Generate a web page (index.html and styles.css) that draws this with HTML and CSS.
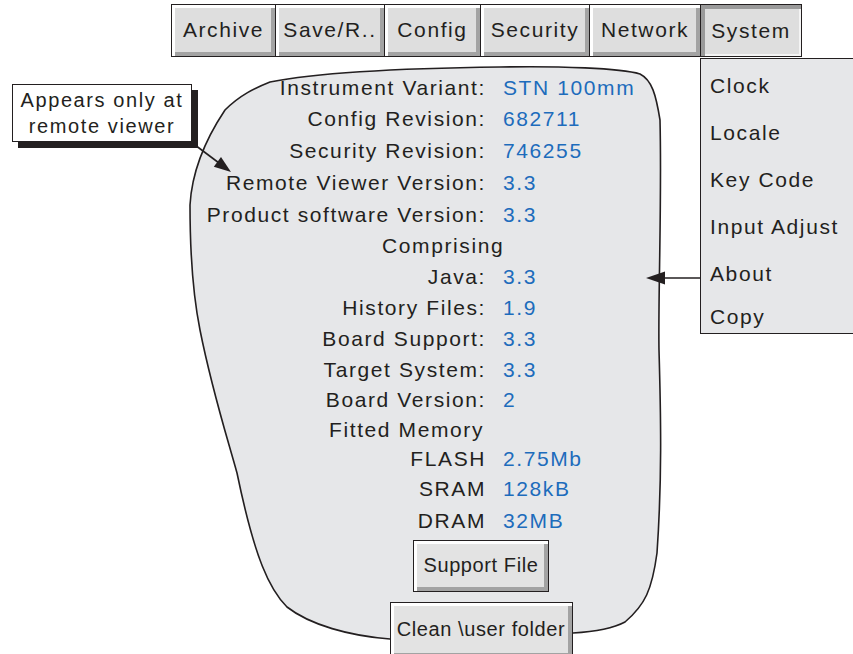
FILE: index.html
```html
<!DOCTYPE html>
<html lang="en">
<head>
    <meta charset="UTF-8">
    <title>System - About</title>
    <link rel="stylesheet" href="styles.css">
</head>
<body>
    <div class="stage">
        <svg class="diagram" width="853" height="654" viewBox="0 0 853 654">
            <path class="blob" d="M 270 82 C 320 72, 420 68, 500 67 C 560 66, 620 68, 640 74 C 652 80, 656 95, 660 120 C 662 200, 658 300, 659 350 C 661 420, 662 480, 657 553 C 652 590, 645 605, 625 622 C 610 630, 590 632, 573 633 L 390 639 C 350 636, 310 625, 287 607 C 270 590, 255 560, 237 473 C 225 430, 212 390, 200 330 C 192 290, 190 240, 190 205 C 192 170, 205 140, 225 110 C 240 95, 255 88, 270 82 Z"/>
            <line class="pointer" x1="195" y1="145" x2="219" y2="163"/>
            <polygon class="head" points="231,172 213.8,166.7 221,157.1"/>
            <line class="pointer" x1="702" y1="278" x2="662" y2="278"/>
            <polygon class="head" points="646,278 665,271.5 665,284.5"/>
        </svg>

        <nav class="menubar">
            <div class="tab w-archive">Archive</div>
            <div class="tab w-save">Save/R..</div>
            <div class="tab w-config">Config</div>
            <div class="tab w-security">Security</div>
            <div class="tab w-network">Network</div>
            <div class="tab w-system pressed">System
                <ul class="dropdown">
                    <li>Clock</li>
                    <li>Locale</li>
                    <li>Key Code</li>
                    <li>Input Adjust</li>
                    <li>About</li>
                    <li>Copy</li>
                </ul>
            </div>
        </nav>

        <div class="callout">Appears only at<br>remote viewer</div>

        <main class="info">
            <div class="grid">
                <div class="label">Instrument Variant:</div><div class="value">STN 100mm</div>
                <div class="label">Config Revision:</div><div class="value">682711</div>
                <div class="label">Security Revision:</div><div class="value">746255</div>
                <div class="label">Remote Viewer Version:</div><div class="value">3.3</div>
                <div class="label">Product software Version:</div><div class="value">3.3</div>
                <div class="heading comprising">Comprising</div>
                <div class="label">Java:</div><div class="value">3.3</div>
                <div class="label">History Files:</div><div class="value">1.9</div>
                <div class="label">Board Support:</div><div class="value">3.3</div>
                <div class="label">Target System:</div><div class="value">3.3</div>
                <div class="label">Board Version:</div><div class="value">2</div>
                <div class="heading memory">Fitted Memory</div>
                <div class="label">FLASH</div><div class="value">2.75Mb</div>
                <div class="label">SRAM</div><div class="value">128kB</div>
                <div class="label">DRAM</div><div class="value">32MB</div>
            </div>
            <button class="btn support">Support File</button>
            <button class="btn clean">Clean \user folder</button>
        </main>
    </div>
</body>
</html>
```

FILE: styles.css
```css
body { margin: 0; font-family: "Liberation Sans", Arial, sans-serif; color: #231f20; background: #fff; overflow: hidden; }
.stage { position: relative; width: 853px; height: 654px; overflow: hidden; }

.diagram { position: absolute; left: 0; top: 0; }
.blob { fill: #e6e7e9; stroke: #231f20; stroke-width: 1.6; }
.pointer { stroke: #231f20; stroke-width: 1.6; }
.head { fill: #231f20; }

.menubar { position: relative; z-index: 2; display: flex; margin-left: 172px; padding-top: 4px; height: 53px; }
.tab { box-sizing: border-box; height: 53px; margin-left: -1px; padding-bottom: 2px; border: 1px solid #231f20; background: #dedede; box-shadow: inset 3px 3px 0 #fff, inset -4px -4px 0 #a3a3a3; font-size: 21px; letter-spacing: 1.6px; display: flex; align-items: center; justify-content: center; }
.tab.pressed { position: relative; padding-bottom: 0; box-shadow: inset 4px 4px 0 #9a9a9a, inset -2px -2px 0 #f4f4f4; }
.w-archive { width: 105px; }
.w-save { width: 110px; }
.w-config { width: 97px; }
.w-security { width: 110px; }
.w-network { width: 112px; }
.w-system { width: 102px; }

.dropdown { position: absolute; left: -1px; top: 53px; width: 170px; height: 276px; box-sizing: border-box; margin: 0; padding: 4px 0 0 9px; list-style: none; background: #e6e7e9; border: 1.5px solid #231f20; }
.dropdown li { height: 47px; line-height: 45px; }
.dropdown li:last-child { line-height: 38px; }

.callout { position: absolute; left: 12px; top: 84px; width: 180px; height: 58px; box-sizing: border-box; padding-top: 2px; border: 1.5px solid #231f20; background: #fff; box-shadow: 6px 6px 0 #231f20; font-size: 20px; letter-spacing: 1.6px; line-height: 26px; text-align: center; }

.info { position: relative; z-index: 1; width: 562px; margin: 15px 0 0 200px; display: flex; flex-direction: column; align-items: center; }
.grid { display: grid; grid-template-columns: 286px 1fr; grid-template-rows: 31px 31.5px 32.5px 31.5px 31px 31.5px 31px 31px 31px 30px 29.5px 29.5px 30px 31.5px 32px; column-gap: 17px; width: 100%; font-size: 21px; letter-spacing: 1.6px; line-height: 31px; }
.label { text-align: right; }
.value { color: #1d6cbc; }
.heading { grid-column: 1 / -1; }
.comprising { padding-left: 182px; }
.memory { padding-left: 129px; }

.btn { font: inherit; font-size: 20px; letter-spacing: 0.6px; color: inherit; padding: 0; background: #e3e3e3; border: 1px solid #231f20; box-shadow: inset 3px 3px 0 #fff, inset -4px -4px 0 #a3a3a3; }
.support { width: 136px; height: 52px; margin-top: 3px; }
.clean { width: 183px; height: 56px; margin-top: 10px; }
```
